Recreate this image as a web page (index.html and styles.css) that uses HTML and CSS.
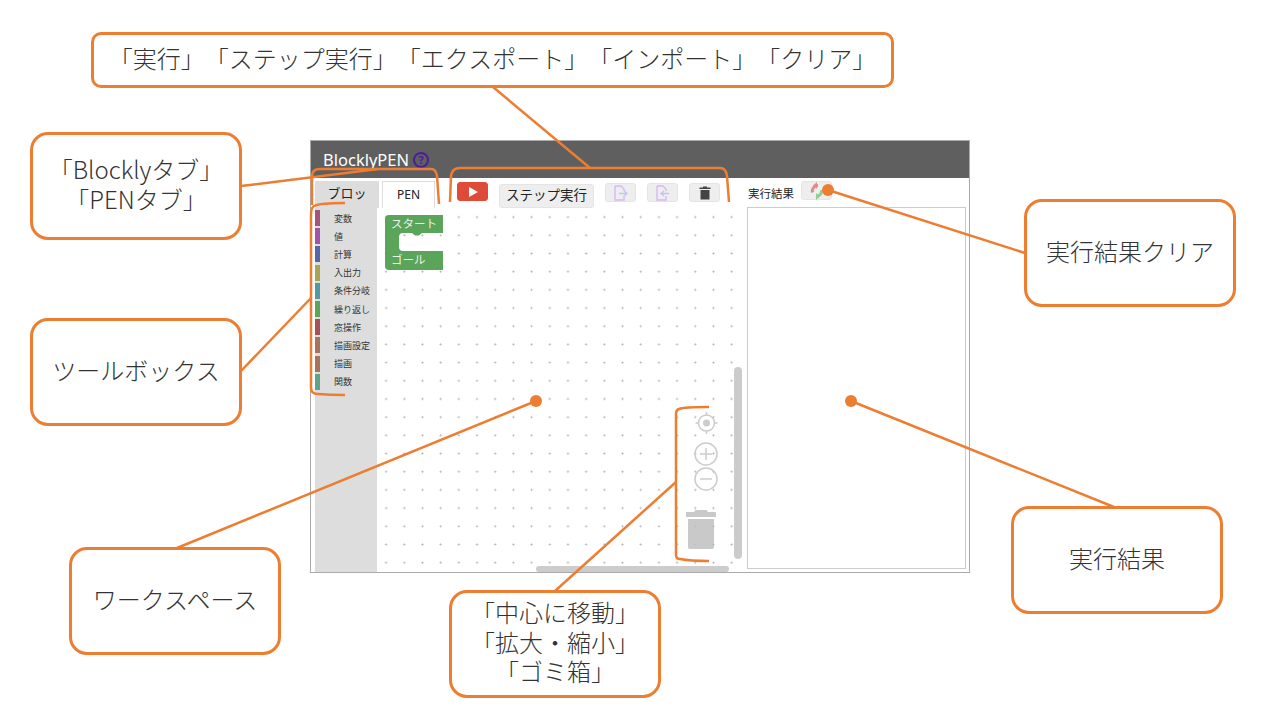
FILE: index.html
```html
<!DOCTYPE html>
<html lang="ja">
<head>
  <meta charset="UTF-8" />
  <title>BlocklyPEN</title>
  <link rel="stylesheet" href="styles.css">
</head>
<body>
  <div class="app">
    <header class="app-header">
      <span class="app-title">BlocklyPEN</span>
      <span class="help">?</span>
    </header>
    <div class="app-body">
      <div class="left-col">
        <div class="toolbar-row">
          <div class="tabs">
            <div class="tab tab-blockly">ブロック</div>
            <div class="tab tab-pen">PEN</div>
          </div>
          <div class="toolbar">
            <button class="btn btn-run">
              <svg width="12" height="12" viewBox="0 0 12 12"><path d="M2 1l9 5-9 5z" fill="#fff"/></svg>
            </button>
            <button class="btn btn-step">ステップ実行</button>
            <button class="btn btn-icon">
              <svg width="18" height="16" viewBox="0 0 18 16"><path d="M3 1h6l3 3v2M12 11v4H3V1" fill="none" stroke="#d9b8f2" stroke-width="1.4"/><path d="M7 8.500h7M12 6l3 2.500-3 2.500" fill="none" stroke="#c4c4f0" stroke-width="1.400"/></svg>
            </button>
            <button class="btn btn-icon">
              <svg width="18" height="16" viewBox="0 0 18 16"><path d="M3 1h6l3 3v2M12 11v4H3V1" fill="none" stroke="#d9b8f2" stroke-width="1.4"/><path d="M15 8.500H8M10 6L7 8.500l3 2.500" fill="none" stroke="#c4c4f0" stroke-width="1.400"/></svg>
            </button>
            <button class="btn btn-icon">
              <svg width="12" height="14" viewBox="0 0 12 14"><path d="M4 1.500V.5h4v1h3.500V3H.5V1.500zM1.500 4h9v9.500h-9z" fill="#444"/></svg>
            </button>
          </div>
        </div>
        <div class="main">
          <ul class="toolbox">
            <li class="cat"><i class="strip c-var"></i>変数</li>
            <li class="cat"><i class="strip c-val"></i>値</li>
            <li class="cat"><i class="strip c-calc"></i>計算</li>
            <li class="cat"><i class="strip c-io"></i>入出力</li>
            <li class="cat"><i class="strip c-if"></i>条件分岐</li>
            <li class="cat"><i class="strip c-loop"></i>繰り返し</li>
            <li class="cat"><i class="strip c-win"></i>窓操作</li>
            <li class="cat"><i class="strip c-set"></i>描画設定</li>
            <li class="cat"><i class="strip c-draw"></i>描画</li>
            <li class="cat"><i class="strip c-func"></i>関数</li>
          </ul>
          <div class="workspace">
            <svg class="block" width="60" height="57" viewBox="0 0 60 57">
              <path d="M5 1h54v18H38l-3 2.500h-4L28 19H19a4 4 0 0 0-4 4v10a4 4 0 0 0 4 4h40v19H5a4 4 0 0 1-4-4V5a4 4 0 0 1 4-4z" fill="#5ba55b"/>
              <text x="7" y="14" class="block-text">スタート</text>
              <text x="7" y="50" class="block-text">ゴール</text>
            </svg>
            <svg class="zoom-ctl" width="40" height="150" viewBox="0 0 40 150">
              <g fill="none" stroke="#ccc" stroke-width="1.500">
                <circle cx="20.500" cy="14" r="8"/>
                <path d="M20.500 3v3M20.500 22v3M9.500 14h3M28.500 14h3"/>
                <circle cx="20" cy="45" r="11"/>
                <path d="M14 45h12M20 39v12"/>
                <circle cx="20" cy="70" r="11"/>
                <path d="M14 70h12"/>
              </g>
              <circle cx="20.500" cy="14" r="3.500" fill="#ccc"/>
              <path class="trash" d="M8 103l1.500-2h11l1.500 2h8v5H0v-5zM2 110h26v28a2 2 0 0 1-2 2H4a2 2 0 0 1-2-2z"/>
            </svg>
            <div class="scroll-v"></div>
            <div class="scroll-h"></div>
          </div>
        </div>
      </div>
      <div class="result-col">
        <div class="result-head">
          <span class="result-label">実行結果</span>
          <button class="btn btn-clear">
            <svg width="18" height="18" viewBox="0 0 18 18">
              <path d="M10 3.500A5.500 5.500 0 0 0 4.500 10.500" fill="none" stroke="#e58a8a" stroke-width="3"/>
              <path d="M9 0L5 3.500 9 7z" fill="#e58a8a"/>
              <path d="M8 14.500A5.500 5.500 0 0 0 13.500 8" fill="none" stroke="#8fd08f" stroke-width="3"/>
              <path d="M8 18l4-3.500L8 11z" fill="#8fd08f"/>
            </svg>
          </button>
        </div>
        <div class="result-box"></div>
      </div>
    </div>
  </div>

  <svg class="marks" width="1280" height="720" viewBox="0 0 1280 720">
    <g fill="none" stroke="#ed7d31" stroke-width="2.500">
      <path d="M493 87L590 168"/>
      <path d="M241 186L378 169"/>
      <path d="M312 205V176Q312 169 320 169H431Q436 169 437 176L439 204"/>
      <path d="M450 202L451 176Q452 168 460 168H720Q726 168 727 176L729 202"/>
      <path d="M345 203Q320 203 314 206Q311 208 311 214V388Q311 394 318 394Q330 395 345 395"/>
      <path d="M241 371L311 298"/>
      <path d="M177 548L536 401"/>
      <path d="M851 401L1114 507"/>
      <path d="M828 190L1025 253"/>
      <path d="M709 407Q684 407 679 409Q676 410 676 414V555Q676 559 680 559Q690 561 709 561"/>
      <path d="M676 482L555 591"/>
    </g>
    <g fill="#ed7d31">
      <circle cx="536" cy="401" r="6"/>
      <circle cx="851" cy="401" r="6"/>
      <circle cx="828" cy="190" r="6"/>
    </g>
  </svg>

  <div class="callout c-actions">「実行」「ステップ実行」「エクスポート」「インポート」「クリア」</div>
  <div class="callout c-tabs">「Blocklyタブ」<br>「PENタブ」</div>
  <div class="callout c-tools">ツールボックス</div>
  <div class="callout c-space">ワークスペース</div>
  <div class="callout c-zoom">「中心に移動」<br>「拡大・縮小」<br>「ゴミ箱」</div>
  <div class="callout c-result">実行結果</div>
  <div class="callout c-clear">実行結果クリア</div>
</body>
</html>
```

FILE: styles.css
```css
* {
  box-sizing: border-box;
}
body {
  margin: 0;
  width: 1280px;
  height: 720px;
  overflow: hidden;
  background: white;
  font-family: "Noto Sans", "Noto Sans CJK JP", sans-serif;
  position: relative;
}
.app {
  position: absolute;
  left: 310px;
  top: 140px;
  width: 660px;
  height: 433px;
  border: 1px solid #aaa;
  display: flex;
  flex-direction: column;
}
.app-header {
  height: 37px;
  background: #5f5f5f;
  display: flex;
  align-items: center;
  gap: 4px;
  padding-left: 12px;
  flex-shrink: 0;
}
.app-title {
  color: white;
  font-size: 16.500px;
}
.help {
  width: 16px;
  height: 16px;
  border: 2px solid #4a1e96;
  border-radius: 50%;
  color: #4a1e96;
  font-size: 11px;
  font-weight: bold;
  line-height: 12px;
  text-align: center;
}
.app-body {
  flex: 1;
  display: flex;
  padding-left: 4px;
  min-height: 0;
}
.left-col {
  width: 428px;
  display: flex;
  flex-direction: column;
}
.toolbar-row {
  height: 30px;
  display: flex;
  flex-shrink: 0;
}
.tabs {
  display: flex;
  gap: 3px;
  padding-top: 3px;
  width: 142px;
}
.tab {
  height: 27px;
  font-size: 12px;
  color: #222;
  text-align: center;
  line-height: 25px;
  overflow: hidden;
}
.tab-blockly {
  width: 64px;
  background: #ddd;
  padding: 0 11px;
  font-size: 13px;
}
.tab-pen {
  width: 53px;
  border: 1px solid #ddd;
  border-bottom: none;
}
.toolbar {
  display: flex;
  align-items: flex-start;
  gap: 11px;
  padding-top: 4px;
}
.btn {
  border: 1px solid #e4e4e4;
  background: #eee;
  border-radius: 3px;
  padding: 0;
  font-family: inherit;
  display: flex;
  align-items: center;
  justify-content: center;
}
.btn-run {
  width: 31px;
  height: 19px;
  background: #e04b39;
  border-color: #e04b39;
}
.btn-step {
  width: 95px;
  height: 24px;
  margin-top: 2px;
  padding-bottom: 5px;
  font-size: 13.500px;
  color: #222;
}
.btn-icon {
  width: 31px;
  height: 19px;
  margin-top: 1px;
}
.main {
  flex: 1;
  display: flex;
  min-height: 0;
}
.toolbox {
  width: 62px;
  margin: 0;
  padding: 1px 0 0;
  list-style: none;
  background: #ddd;
  flex-shrink: 0;
}
.cat {
  height: 18.200px;
  display: flex;
  align-items: center;
  gap: 14px;
  font-size: 9px;
  color: #333;
  white-space: nowrap;
}
.strip {
  width: 5px;
  height: 16px;
  flex-shrink: 0;
}
.c-var { background: #a5527e; }
.c-val { background: #a053a8; }
.c-calc { background: #5567a8; }
.c-io { background: #a5a552; }
.c-if { background: #5299a5; }
.c-loop { background: #5ba55b; }
.c-win { background: #a55257; }
.c-set { background: #a5745b; }
.c-draw { background: #a5745b; }
.c-func { background: #5ba58c; }
.workspace {
  flex: 1;
  position: relative;
  background-color: white;
  background-image: radial-gradient(circle, #b4b4b4 0.8px, transparent 1.2px);
  background-size: 18.200px 18.200px;
  overflow: hidden;
}
.block {
  position: absolute;
  left: 7px;
  top: 6px;
}
.block-text {
  fill: white;
  font-size: 11.500px;
  fill-opacity: 0.9;
}
.zoom-ctl {
  position: absolute;
  left: 309px;
  top: 201px;
}
.trash {
  fill: #bbb;
  fill-opacity: 0.8;
}
.scroll-v {
  position: absolute;
  left: 357px;
  top: 159px;
  width: 8px;
  height: 192px;
  border-radius: 4px;
  background: #ccc;
}
.scroll-h {
  position: absolute;
  left: 159px;
  top: 358px;
  width: 193px;
  height: 6px;
  border-radius: 3px;
  background: #ccc;
}
.result-col {
  flex: 1;
  display: flex;
  flex-direction: column;
  padding: 0 3px 3px 4px;
}
.result-head {
  height: 29px;
  display: flex;
  align-items: flex-start;
  flex-shrink: 0;
  gap: 7px;
  padding-top: 3px;
}
.result-label {
  font-size: 11.500px;
  color: #222;
  padding: 4px 0 0 1px;
}
.btn-clear {
  width: 31px;
  height: 19px;
}
.result-box {
  flex: 1;
  border: 1px solid #ccc;
}
.marks {
  position: absolute;
  left: 0;
  top: 0;
}
.callout {
  position: absolute;
  width: 212px;
  height: 108px;
  padding-bottom: 5px;
  background: white;
  border: 3px solid #ed7d31;
  border-radius: 18px;
  display: flex;
  align-items: center;
  justify-content: center;
  text-align: center;
  font-family: "Noto Sans CJK JP", sans-serif;
  font-size: 24px;
  font-weight: 300;
  line-height: 29.500px;
  color: #333;
  text-spacing-trim: space-all;
}
.c-actions { left: 91px; top: 32px; width: 803px; height: 56px; border-radius: 10px; }
.c-tabs { left: 30px; top: 132px; }
.c-tools { left: 30px; top: 318px; }
.c-space { left: 69px; top: 547px; }
.c-zoom { left: 449px; top: 590px; }
.c-result { left: 1011px; top: 506px; }
.c-clear { left: 1024px; top: 199px; }
```
